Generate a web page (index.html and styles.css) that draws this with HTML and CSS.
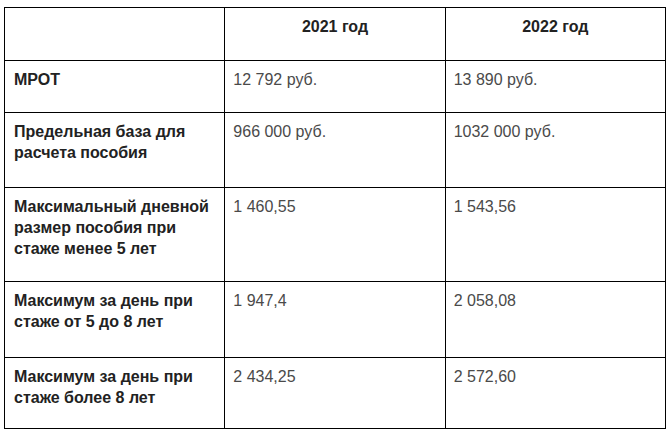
FILE: index.html
```
<!DOCTYPE html>
<html lang="ru">
<head>
<meta charset="utf-8">
<link rel="stylesheet" href="styles.css">
</head>
<body>
<table class="grid">
  <tr class="r-head">
    <th class="label"></th>
    <th class="year">2021 год</th>
    <th class="year">2022 год</th>
  </tr>
  <tr class="r1">
    <td class="label">МРОТ</td>
    <td class="val">12 792 руб.</td>
    <td class="val">13 890 руб.</td>
  </tr>
  <tr class="r2">
    <td class="label">Предельная база для расчета пособия</td>
    <td class="val">966 000 руб.</td>
    <td class="val">1032 000 руб.</td>
  </tr>
  <tr class="r3">
    <td class="label">Максимальный дневной размер пособия при стаже менее 5 лет</td>
    <td class="val">1 460,55</td>
    <td class="val">1 543,56</td>
  </tr>
  <tr class="r4">
    <td class="label">Максимум за день при стаже от 5 до 8 лет</td>
    <td class="val">1 947,4</td>
    <td class="val">2 058,08</td>
  </tr>
  <tr class="r5">
    <td class="label">Максимум за день при стаже более 8 лет</td>
    <td class="val">2 434,25</td>
    <td class="val">2 572,60</td>
  </tr>
</table>
</body>
</html>
```

FILE: styles.css
```
html, body {
  margin: 0;
  padding: 0;
  background: #fff;
}

body {
  font-family: "Liberation Sans", Arial, sans-serif;
  font-size: 16px;
  line-height: 21px;
  color: #2a2a2a;
}

.grid {
  border-collapse: collapse;
  table-layout: fixed;
  width: 662px;
  margin: 7px 0 0 4px;
}

.grid th,
.grid td {
  border: 1px solid #000;
  vertical-align: top;
  padding: 8px 9px 0 9px;
  width: 33.33%;
}

.grid .year {
  text-align: center;
  font-weight: bold;
  color: #222;
}

.grid .label {
  font-weight: bold;
  color: #222;
}

.grid .val {
  font-weight: normal;
  color: #4a4a4a;
  padding-left: 8px;
}

.r-head { height: 53px; }
.r1 { height: 52px; }
.r2 { height: 75px; }
.r3 { height: 94px; }
.r4 { height: 76px; }
.r5 { height: 71px; }
```
